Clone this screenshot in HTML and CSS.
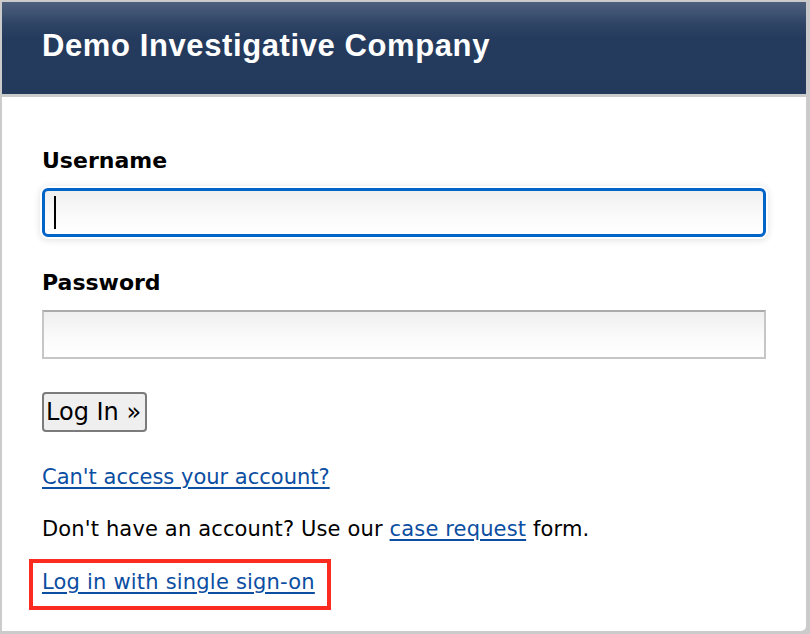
FILE: index.html
```html
<!DOCTYPE html>
<html lang="en">
<head>
<meta charset="utf-8">
<title>Demo Investigative Company - Log In</title>
<link rel="stylesheet" href="styles.css">
</head>
<body>
<div class="frame">
  <header class="banner">
    <h1 class="banner-title">Demo Investigative Company</h1>
  </header>
  <main class="panel">
    <div class="field-label">Username</div>
    <div class="field field-focus"><span class="caret"></span></div>
    <div class="field-label">Password</div>
    <div class="field"></div>
    <button class="login-btn" type="button">Log In »</button>
    <p class="line line-help"><a href="#" class="link">Can't access your account?</a></p>
    <p class="line line-note">Don't have an account? Use our <a href="#" class="link">case request</a> form.</p>
    <p class="line line-sso"><span class="highlight"><a href="#" class="link">Log in with single sign-on</a></span></p>
  </main>
</div>
</body>
</html>
```
FILE: styles.css
```css
html, body {
  margin: 0;
  padding: 0;
}

body {
  background: #cbcbcb;
  font-family: "DejaVu Sans", Verdana, sans-serif;
  color: #000;
}

.frame {
  box-sizing: border-box;
  height: 634px;
  padding: 2px 4px 3px 2px;
  display: flex;
  flex-direction: column;
}

.banner {
  height: 92px;
  margin-bottom: 3px;
  padding: 29px 0 0 40px;
  box-sizing: border-box;
  background: linear-gradient(#4d5f7c 0px, #2f4566 22px, #253b5d 36px, #243a5c 100%);
}

.banner-title {
  margin: 0;
  color: #fff;
  font-family: "Liberation Sans", Arial, sans-serif;
  font-weight: bold;
  font-size: 31px;
  line-height: 30px;
  letter-spacing: 0.6px;
}

.panel {
  flex: 1;
  background: #fff;
  border-bottom-right-radius: 5px;
  padding: 51px 40px 0 40px;
}

.field-label {
  font-weight: bold;
  font-size: 22px;
  line-height: 26px;
  margin: 0 0 14px;
}

.field {
  box-sizing: border-box;
  height: 49px;
  margin-bottom: 33px;
  border: 2px solid #c6c6c6;
  border-top-color: #ababab;
  background: linear-gradient(#efefef, #fbfbfb 60%, #fff);
  display: flex;
  align-items: center;
}

.field-focus {
  border: 3px solid #0064c9;
  border-radius: 6px;
  box-shadow: 0 0 0 2px #fff, 0 1px 7px 2px rgba(0, 0, 0, 0.13);
}

.caret {
  display: block;
  width: 2px;
  height: 33px;
  margin-left: 9px;
  background: #000;
}

.login-btn {
  display: block;
  box-sizing: border-box;
  height: 40px;
  margin: 30px 0 0;
  padding: 0 4px 0 2px;
  font-family: "DejaVu Sans", Verdana, sans-serif;
  font-size: 24px;
  line-height: 34px;
  color: #000;
  background: #efefef;
  border: 2px solid #7b7b7b;
  border-radius: 4px;
}

.line {
  margin: 0;
  font-size: 21px;
  line-height: 25px;
}

.line-help {
  margin-top: 33px;
}

.line-note {
  margin-top: 27px;
  letter-spacing: 0.15px;
}

.line-sso {
  margin-top: 28px;
}

.link {
  color: #0b4ea2;
  text-decoration: underline;
  text-decoration-thickness: 1.5px;
  text-underline-offset: 3px;
}

.line-sso .link {
  letter-spacing: 0.2px;
}

.highlight {
  display: inline-block;
  vertical-align: top;
  border: 4px solid #fb2c1f;
  padding: 7px 12px 11px 9px;
  margin: -11px 0 0 -13px;
}
```
